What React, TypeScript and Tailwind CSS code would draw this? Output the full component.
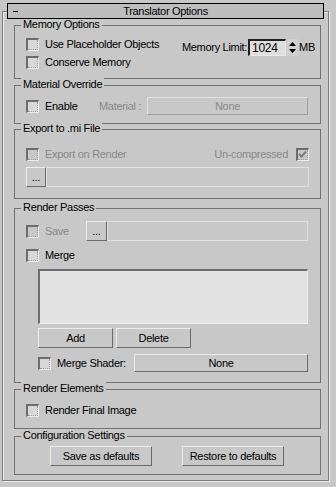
import React from "react";

const font = "font-['Liberation_Sans',Arial,sans-serif] text-[11px] tracking-[-0.3px] leading-[13px]";

function Check({ disabled = false, checked = false }: { disabled?: boolean; checked?: boolean }) {
  return (
    <span className="flex w-[13px] h-[13px] shrink-0 border-t-2 border-l-2 border-r border-b border-t-[#6c6c6c] border-l-[#6c6c6c] border-r-[#ececec] border-b-[#ececec]">
      <span
        className={`flex-1 flex items-center justify-center border-r border-b border-dotted border-r-[#9c9c9c] border-b-[#9c9c9c] ${disabled ? "bg-[#c8c8c8]" : "bg-[#d8d8d8]"}`}
      >
        {checked && (
          <svg width="9" height="9" viewBox="0 0 9 9">
            <path d="M1 4 L3.5 6.5 L8 1.5" stroke="#7c7c7c" strokeWidth="2" fill="none" />
          </svg>
        )}
      </span>
    </span>
  );
}

function Btn({ children, className = "", disabled = false }: { children?: React.ReactNode; className?: string; disabled?: boolean }) {
  return (
    <div
      className={`flex items-center justify-center border ${disabled ? "border-t-[#e2e2e2] border-l-[#e2e2e2] border-r-[#a0a0a0] border-b-[#a0a0a0] text-[#888888]" : "border-t-[#ececec] border-l-[#ececec] border-r-[#6a6a6a] border-b-[#6a6a6a] text-black"} ${className}`}
    >
      {children}
    </div>
  );
}

function Group({ title, className = "", children }: { title: string; className?: string; children?: React.ReactNode }) {
  return (
    <div className={`relative w-[307px] border border-[#727272] ${className}`}>
      <span className="absolute left-[6px] top-[-8px] px-[2px] bg-[#c8c8c8] text-black">{title}</span>
      {children}
    </div>
  );
}

export default function App() {
  return (
    <div className={`w-[336px] h-[487px] bg-[#c8c8c8] overflow-hidden pt-[3px] ${font} text-black`}>
      <div className="relative z-10 ml-[7px] w-[317px] h-[16px] border border-black bg-[#bebebe] grid grid-cols-[20px_1fr_20px] items-center">
        <div className="pl-[5px] flex items-center">
          <span className="block w-[5px] h-[1px] bg-black" />
        </div>
        <div className="text-center">Translator Options</div>
        <div />
      </div>
      <div className="mt-[-8px] ml-[2px] w-[327px] h-[470px] border border-[#7a7a7a] shadow-[inset_1px_1px_0_#ececec,1px_1px_0_#ececec] pt-[13px] pl-[11px]">
        {/* Memory Options */}
        <Group title="Memory Options" className="h-[54px]">
          <div className="flex pl-[11px] pt-[12px] pr-[5px]">
            <div className="flex flex-col gap-[5px]">
              <div className="flex items-center h-[13px]">
                <Check />
                <span className="ml-[6px]">Use Placeholder Objects</span>
              </div>
              <div className="flex items-center h-[13px]">
                <Check />
                <span className="ml-[6px]">Conserve Memory</span>
              </div>
            </div>
            <div className="ml-auto mt-[1px] flex items-center h-[17px]">
              <span className="mr-[1px]">Memory Limit:</span>
              <div className="w-[38px] h-[17px] border-t-2 border-l-2 border-r border-b border-t-[#222] border-l-[#222] border-r-[#e8e8e8] border-b-[#e8e8e8] bg-[#dedede] pl-[2px] flex items-center text-[12px]">
                1024
              </div>
              <svg width="11" height="17" viewBox="0 0 11 17" className="ml-[1px]">
                <rect x="0" y="0" width="11" height="17" fill="#d0d0d0" />
                <path d="M2 7 L5.5 3 L9 7 Z" fill="#000" />
                <path d="M2 10 L5.5 14 L9 10 Z" fill="#000" />
              </svg>
              <span className="ml-[1px]">MB</span>
            </div>
          </div>
        </Group>

        {/* Material Override */}
        <Group title="Material Override" className="h-[39px] mt-[6px]">
          <div className="flex items-center pl-[11px] pt-[11px] h-[29px]">
            <div className="flex items-center w-[73px]">
              <Check />
              <span className="ml-[6px]">Enable</span>
            </div>
            <span className="w-[48px] text-[#888888]">Material :</span>
            <Btn disabled className="w-[161px] h-[18px]">None</Btn>
          </div>
        </Group>

        {/* Export to .mi File */}
        <Group title="Export to .mi File" className="h-[70px] mt-[5px]">
          <div className="pl-[11px] pr-[11px] pt-[18px]">
            <div className="flex items-center h-[13px]">
              <Check disabled />
              <span className="ml-[6px] text-[#888888]">Export on Render</span>
              <span className="ml-auto mr-[8px] text-[#888888]">Un-compressed</span>
              <Check disabled checked />
            </div>
            <div className="flex mt-[6px]">
              <Btn className="w-[20px] h-[20px]">...</Btn>
              <div className="w-[263px] h-[20px] border border-[#e0e0e0]" />
            </div>
          </div>
        </Group>

        {/* Render Passes */}
        <Group title="Render Passes" className="h-[175px] mt-[9px]">
          <div className="pl-[11px] pt-[12px]">
            <div className="flex items-center h-[20px]">
              <div className="flex items-center w-[60px]">
                <Check disabled />
                <span className="ml-[6px] text-[#888888]">Save</span>
              </div>
              <Btn className="w-[21px] h-[20px]">...</Btn>
              <div className="w-[201px] h-[20px] border border-[#e0e0e0]" />
            </div>
            <div className="flex items-center h-[13px] mt-[8px]">
              <Check />
              <span className="ml-[6px]">Merge</span>
            </div>
            <div className="ml-[12px] mt-[7px] w-[270px] h-[55px] border-t-2 border-l-2 border-r border-b border-t-[#6c6c6c] border-l-[#6c6c6c] border-r-[#f0f0f0] border-b-[#f0f0f0] bg-[#e2e2e2]" />
            <div className="ml-[12px] mt-[4px] flex gap-[3px]">
              <Btn className="w-[75px] h-[20px]">Add</Btn>
              <Btn className="w-[75px] h-[20px]">Delete</Btn>
            </div>
            <div className="ml-[12px] mt-[6px] flex items-center h-[18px]">
              <div className="flex items-center w-[96px]">
                <Check />
                <span className="ml-[6px]">Merge Shader:</span>
              </div>
              <Btn className="w-[174px] h-[18px]">None</Btn>
            </div>
          </div>
        </Group>

        {/* Render Elements */}
        <Group title="Render Elements" className="h-[40px] mt-[6px]">
          <div className="pl-[11px] pt-[14px] flex items-center">
            <Check />
            <span className="ml-[6px]">Render Final Image</span>
          </div>
        </Group>

        {/* Configuration Settings */}
        <Group title="Configuration Settings" className="h-[39px] mt-[7px]">
          <div className="pl-[35px] pt-[9px] flex gap-[30px]">
            <Btn className="w-[102px] h-[20px]">Save as defaults</Btn>
            <Btn className="w-[102px] h-[20px]">Restore to defaults</Btn>
          </div>
        </Group>
      </div>
    </div>
  );
}
